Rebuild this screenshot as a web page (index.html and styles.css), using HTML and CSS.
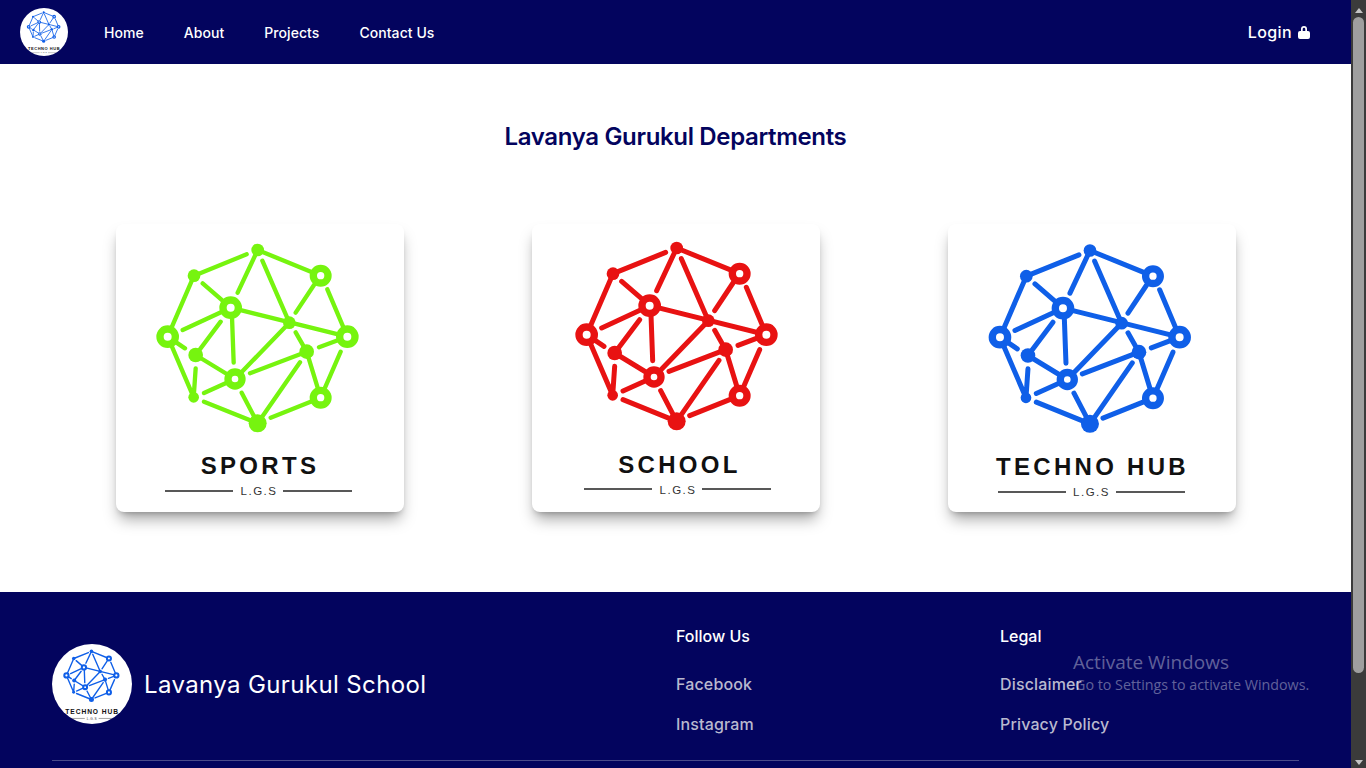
FILE: index.html
```html
<!DOCTYPE html>
<html lang="en">
<head>
    <meta charset="UTF-8">
    <meta name="viewport" content="width=device-width, initial-scale=1.0">
    <title>Lavanya Gurukul Departments</title>
    <link rel="stylesheet" href="styles.css">
</head>
<body>
    <svg class="defs" width="0" height="0" aria-hidden="true">
        <symbol id="net" viewBox="0 0 900 900">
            <g class="net-lines">
                <path d="M443 75L632 152M252 152L410 88M443 75L383 203M457 107L538 293M252 152L173 335M278 175L362 248M362 248L218 315M362 248L712 335M612 180L557 263M652 193L712 335M332 290L257 390M365 248L371 413M538 293L375 462M173 335L225 370M257 430L251 517M173 335L251 517M257 390L375 462M375 462L282 504M420 445L590 380M557 322L590 380M590 380L632 518M712 335L627 367M692 380L632 518M570 412L443 595M395 503L443 595M282 530L443 595M482 578L632 518"/>
            </g>
            <g class="net-solid">
                <circle cx="443" cy="75" r="19"/>
                <circle cx="252" cy="152" r="19"/>
                <circle cx="538" cy="293" r="19"/>
                <circle cx="590" cy="380" r="22"/>
                <circle cx="257" cy="390" r="22"/>
                <circle cx="251" cy="517" r="16"/>
                <circle cx="443" cy="595" r="27"/>
            </g>
            <g class="net-rings">
                <circle cx="632" cy="152" r="22"/>
                <circle cx="362" cy="248" r="23"/>
                <circle cx="173" cy="335" r="23"/>
                <circle cx="712" cy="335" r="23"/>
                <circle cx="375" cy="462" r="21"/>
                <circle cx="632" cy="518" r="22"/>
            </g>
        </symbol>
    </svg>

    <div class="page">
        <div class="content">
            <nav class="navbar">
                <div class="nav-left">
                    <svg class="logo logo-small" viewBox="0 0 288 288">
                        <use href="#net" class="blue" x="-5.700" y="1.500" width="300" height="300"/>
                        <text class="logo-title" x="144.500" y="251">TECHNO HUB</text>
                        <path class="logo-rule" d="M50 268h68M168 268h69"/>
                        <text class="logo-sub" x="143.500" y="272">L.G.S</text>
                    </svg>
                    <ul class="nav-links">
                        <li><a href="#">Home</a></li>
                        <li><a href="#">About</a></li>
                        <li><a href="#">Projects</a></li>
                        <li><a href="#">Contact Us</a></li>
                    </ul>
                </div>
                <a class="login" href="#">Login
                    <svg class="lock" viewBox="0 0 12 14"><path d="M3 6V4a3 3 0 0 1 6 0v2h1a2 2 0 0 1 2 2v4a2 2 0 0 1-2 2H2a2 2 0 0 1-2-2V8a2 2 0 0 1 2-2zm1.700 0h2.600V4a1.300 1.300 0 0 0-2.600 0z"/></svg>
                </a>
            </nav>

            <main class="departments">
                <h1>Lavanya Gurukul Departments</h1>
                <div class="cards">
                    <a class="card" href="#">
                        <svg viewBox="0 0 288 288">
                            <use href="#net" class="green" x="-6" y="1" width="300" height="300"/>
                            <text class="logo-title" x="144" y="250">SPORTS</text>
                            <path class="logo-rule" d="M49 267h68M167 267h69"/>
                            <text class="logo-sub" x="143" y="271">L.G.S</text>
                        </svg>
                    </a>
                    <a class="card" href="#">
                        <svg viewBox="0 0 288 288">
                            <use href="#net" class="red" x="-3" y="-1" width="300" height="300"/>
                            <text class="logo-title" x="147.500" y="249">SCHOOL</text>
                            <path class="logo-rule" d="M52 265h68M170 265h69"/>
                            <text class="logo-sub" x="146" y="270">L.G.S</text>
                        </svg>
                    </a>
                    <a class="card" href="#">
                        <svg viewBox="0 0 288 288">
                            <use href="#net" class="blue" x="-5.700" y="1.500" width="300" height="300"/>
                            <text class="logo-title" x="144.500" y="251">TECHNO HUB</text>
                            <path class="logo-rule" d="M50 268h68M168 268h69"/>
                            <text class="logo-sub" x="143.500" y="272">L.G.S</text>
                        </svg>
                    </a>
                </div>
            </main>

            <footer class="footer">
                <div class="footer-grid">
                    <div class="brand">
                        <svg class="logo logo-large" viewBox="0 0 288 288">
                            <use href="#net" class="blue" x="-5.700" y="1.500" width="300" height="300"/>
                            <text class="logo-title" x="144.500" y="251">TECHNO HUB</text>
                            <path class="logo-rule" d="M50 268h68M168 268h69"/>
                            <text class="logo-sub" x="143.500" y="272">L.G.S</text>
                        </svg>
                        <span class="brand-name">Lavanya Gurukul School</span>
                    </div>
                    <div class="footer-col">
                        <h2>Follow Us</h2>
                        <a href="#">Facebook</a>
                        <a href="#">Instagram</a>
                    </div>
                    <div class="footer-col">
                        <h2>Legal</h2>
                        <a href="#">Disclaimer</a>
                        <a href="#">Privacy Policy</a>
                    </div>
                </div>
                <hr class="footer-line">
            </footer>
        </div>

        <div class="scrollbar">
            <span class="arrow arrow-up"></span>
            <span class="thumb"></span>
            <span class="arrow arrow-down"></span>
        </div>
    </div>

    <div class="activate">
        <div class="activate-title">Activate Windows</div>
        <div class="activate-text">Go to Settings to activate Windows.</div>
    </div>
</body>
</html>
```

FILE: styles.css
```css
* {
    box-sizing: border-box;
}
html, body {
    height: 100%;
    margin: 0;
    overflow: hidden;
}
body {
    font-family: Inter, "Noto Sans", sans-serif;
    color: #03045e;
    background: #fff;
}
a {
    color: inherit;
    text-decoration: none;
}
.defs {
    position: absolute;
}
.page {
    display: flex;
    height: 768px;
}
.content {
    flex: 1;
    min-width: 0;
    overflow: hidden;
}

/* navbar */
.navbar {
    height: 64px;
    background: #03045e;
    color: #fff;
    display: flex;
    align-items: center;
    justify-content: space-between;
    padding: 0 41px 0 20px;
}
.nav-left {
    display: flex;
    align-items: center;
    gap: 36px;
}
.nav-links {
    display: flex;
    gap: 40px;
    list-style: none;
    margin: 0;
    padding: 1px 0 0;
    font-size: 14px;
    font-weight: 500;
    letter-spacing: 0.06px;
}
.login {
    display: flex;
    align-items: center;
    gap: 6px;
    font-size: 16px;
    font-weight: 500;
    letter-spacing: 0.4px;
}
.lock {
    width: 12px;
    height: 14px;
    fill: #fff;
}

/* logo */
.logo {
    display: block;
    border-radius: 50%;
    background: #fff;
    flex: none;
}
.logo-small {
    width: 48px;
    height: 48px;
}
.logo-large {
    width: 80px;
    height: 80px;
}
.net-lines path {
    fill: none;
    stroke: currentColor;
    stroke-linecap: round;
}
.net-solid circle {
    fill: currentColor;
}
.net-rings circle {
    fill: #fff;
    stroke: currentColor;
    stroke-width: 22;
}
/* stroke-width inherits into the <use> tree */
.green {
    color: #76f40f;
    stroke-width: 13;
}
.red {
    color: #e81212;
    stroke-width: 15;
}
.blue {
    color: #0f5fe8;
    stroke-width: 15;
}
.logo-title {
    font-family: "Liberation Sans", Arial, sans-serif;
    font-size: 24px;
    font-weight: 700;
    letter-spacing: 3.300px;
    text-anchor: middle;
    fill: #111;
}
.logo-sub {
    font-family: "Liberation Sans", Arial, sans-serif;
    font-size: 11.500px;
    letter-spacing: 1.500px;
    text-anchor: middle;
    fill: #333;
}
.logo-rule {
    fill: none;
    stroke: #222;
    stroke-width: 1.500;
}

/* departments */
.departments {
    height: 528px;
    padding-top: 58px;
}
.departments h1 {
    margin: 0;
    font-size: 24px;
    line-height: 30px;
    font-weight: 600;
    letter-spacing: -0.34px;
    text-align: center;
}
.cards {
    display: flex;
    justify-content: center;
    gap: 128px;
    margin-top: 72px;
}
.card {
    display: block;
    width: 288px;
    height: 288px;
    border-radius: 8px;
    background: #fff;
    box-shadow: 0 10px 15px -3px rgba(0, 0, 0, 0.35), 0 4px 6px -4px rgba(0, 0, 0, 0.3);
}
.card svg {
    display: block;
    width: 100%;
    height: 100%;
}

/* footer */
.footer {
    height: 176px;
    background: #03045e;
    color: #fff;
    padding: 32px 52px 0;
}
.footer-grid {
    display: grid;
    grid-template-columns: 624px 324px 1fr;
    height: 136px;
}
.brand {
    display: flex;
    align-items: center;
    gap: 12px;
    height: 120px;
}
.brand-name {
    font-size: 24px;
    line-height: 32px;
    letter-spacing: 0.38px;
    padding-top: 2px;
}
.footer-col {
    display: flex;
    flex-direction: column;
    align-items: flex-start;
    font-size: 16px;
    line-height: 24px;
    color: #b9b9cf;
}
.footer-col h2 {
    margin: 0 0 24px;
    font-size: 16px;
    line-height: 24px;
    font-weight: 500;
    color: #fff;
}
.footer-col a {
    font-weight: 500;
    letter-spacing: 0.15px;
    margin-bottom: 16px;
}
.footer-line {
    margin: 0;
    border: 0;
    border-top: 1px solid #4a4b8a;
}

/* browser bits */
.scrollbar {
    width: 15px;
    background: #3b3b3b;
    display: flex;
    flex-direction: column;
    align-items: center;
    flex: none;
}
.thumb {
    width: 11px;
    height: 656px;
    margin-top: 4px;
    border-radius: 6px;
    background: #9f9f9f;
}
.arrow {
    width: 0;
    height: 0;
    border-left: 4px solid transparent;
    border-right: 4px solid transparent;
}
.arrow-up {
    margin-top: 8px;
    border-bottom: 5px solid #c4c4c4;
}
.arrow-down {
    margin-top: auto;
    margin-bottom: 3px;
    border-top: 5px solid #c4c4c4;
}
.activate {
    position: absolute;
    left: 1073px;
    top: 650px;
    font-family: "Open Sans", sans-serif;
    color: rgba(255, 255, 255, 0.38);
}
.activate-title {
    font-size: 19px;
    line-height: 24px;
}
.activate-text {
    font-size: 14.300px;
    line-height: 22px;
    padding-left: 2px;
}
```
